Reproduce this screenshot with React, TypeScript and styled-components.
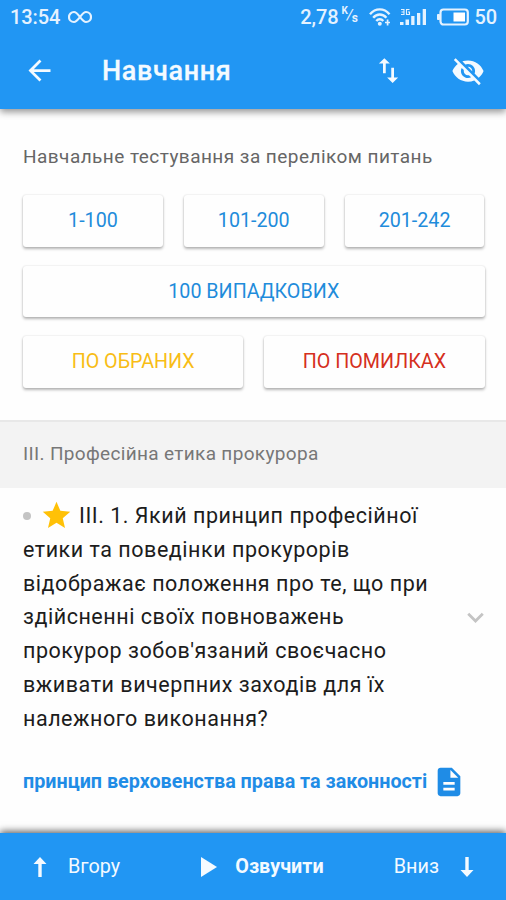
import React from "react";
import styled, { createGlobalStyle } from "styled-components";

const BLUE = "#2196f3";

const GlobalStyle = createGlobalStyle`
  * { box-sizing: border-box; }
  body { margin: 0; background: #fefefe; font-family: Roboto, sans-serif; }
`;

const Screen = styled.div`
  width: 506px;
  height: 900px;
  display: flex;
  flex-direction: column;
  overflow: hidden;
  background: #fefefe;
`;

const Header = styled.header`
  height: 109px;
  flex: none;
  background: ${BLUE};
  color: #f4faff;
  box-shadow: 0 3px 7px rgba(0, 0, 0, 0.42);
  z-index: 1;
`;

const StatusBar = styled.div`
  height: 32px;
  display: flex;
  align-items: center;
  gap: 8px;
  padding: 1px 9px 0 10px;
  color: #e4f2ff;
  svg { display: block; flex: none; }
`;

const StatusText = styled.span`
  font-size: 20px;
  font-weight: 500;
  line-height: 24px;
  letter-spacing: -0.1px;
  white-space: nowrap;
`;

const StatusGroup = styled.div`
  display: flex;
  align-items: center;
  gap: 9px;
  margin-left: auto;
`;

const SpeedReading = styled.div`
  display: flex;
  align-items: center;
  margin-right: 1px;
`;

const SpeedUnit = styled.span`
  display: flex;
  width: 18px;
  margin-left: 3px;
  font-size: 11px;
  font-weight: 700;
  line-height: 12px;
  sup, i, sub { line-height: 12px; vertical-align: baseline; }
  sup { font-size: 10px; margin-top: -4px; }
  i { font-size: 15px; font-weight: 400; margin-left: -1px; }
  sub { font-size: 12px; margin-top: 3px; margin-left: -1px; }
`;

const BatteryReading = styled.div`
  display: flex;
  align-items: center;
  gap: 5px;
  margin-left: 1px;
`;

const Toolbar = styled.div`
  height: 77px;
  display: flex;
  align-items: center;
  padding: 0 21px 0 23px;
  svg { display: block; flex: none; }
`;

const Title = styled.h1`
  margin: 0 auto 0 46px;
  font-size: 27px;
  font-weight: 500;
  line-height: 34px;
  letter-spacing: 0.65px;
  -webkit-text-stroke: 0.3px currentColor;
`;

const ToolbarActions = styled.div`
  display: flex;
  align-items: center;
  gap: 46px;
`;

const Content = styled.main`
  flex: 1;
  min-height: 0;
  display: flex;
  flex-direction: column;
`;

const TestPanel = styled.section`
  height: 313px;
  flex: none;
  padding: 36px 21.5px 0 23px;
  border-bottom: 2px solid #e8e8e8;
`;

const PanelTitle = styled.h2`
  margin: 0 0 26px;
  font-size: 19px;
  font-weight: 400;
  line-height: 24px;
  letter-spacing: 0.45px;
  color: #666;
  white-space: nowrap;
`;

const ButtonRow = styled.div<{ $columns: number }>`
  display: grid;
  grid-template-columns: repeat(${(p) => p.$columns}, 1fr);
  column-gap: 21px;
  margin-bottom: 19px;
`;

const RaisedButton = styled.button<{ $color?: string }>`
  height: 51.5px;
  padding: 1px 0 0;
  border: 0;
  border-radius: 3px;
  background: #fefefe;
  color: ${(p) => p.$color ?? "#1f8cdb"};
  box-shadow: 0 2px 3px rgba(0, 0, 0, 0.28), 0 0 2px rgba(0, 0, 0, 0.14);
  font-family: inherit;
  font-size: 19.7px;
  line-height: 24px;
`;

const SectionHeader = styled.h3`
  height: 66px;
  flex: none;
  margin: 0;
  padding: 20px 23px 0;
  background: #f3f3f3;
  color: #777;
  font-size: 19px;
  font-weight: 400;
  line-height: 24px;
  letter-spacing: 0.33px;
`;

const Question = styled.section`
  display: flex;
  align-items: center;
  padding: 11px 14px 0 23px;
  svg { display: block; flex: none; }
`;

const QuestionText = styled.div`
  flex: 1;
  color: #1c1c1c;
`;

const TextLine = styled.div`
  height: 33.75px;
  display: flex;
  align-items: center;
  font-size: 21.5px;
  line-height: 33.75px;
  letter-spacing: 0.53px;
  white-space: nowrap;
`;

const Dot = styled.span`
  width: 8px;
  height: 8px;
  margin-right: 9px;
  border-radius: 50%;
  background: #c4c4c4;
`;

const StarSlot = styled.span`
  margin-right: 6px;
`;

const Answer = styled.div`
  display: flex;
  align-items: center;
  padding: 29px 0 0 23px;
  color: #1f8ce6;
  font-size: 19.75px;
  font-weight: 700;
  line-height: 34px;
  white-space: nowrap;
  span { padding-top: 1px; }
  svg { display: block; flex: none; margin-left: 5px; }
`;

const Footer = styled.footer`
  height: 67px;
  flex: none;
  display: flex;
  align-items: center;
  justify-content: space-between;
  padding: 0 32px 0 33px;
  background: ${BLUE};
  color: #f4faff;
  box-shadow: 0 -2px 7px rgba(0, 0, 0, 0.6);
  z-index: 1;
`;

const FooterAction = styled.div<{ $primary?: boolean }>`
  display: flex;
  align-items: center;
  gap: ${(p) => (p.$primary ? 18 : 21)}px;
  margin-left: ${(p) => (p.$primary ? 11 : 0)}px;
  font-size: 19.8px;
  line-height: 24px;
  font-weight: ${(p) => (p.$primary ? 700 : 400)};
  svg { display: block; flex: none; }
`;

function Icon({ d, size = 33, color = "currentColor" }: { d: string; size?: number; color?: string }) {
  return (
    <svg width={size} height={size} viewBox="0 0 24 24" fill={color}>
      <path d={d} />
    </svg>
  );
}

const paths = {
  back: "M20 11H7.83l5.59-5.59L12 4l-8 8 8 8 1.41-1.41L7.83 13H20v-2z",
  swap: "M16 17.01V10h-2v7.01h-3L15 21l4-3.99h-3zM9 3L5 6.99h3V14h2V6.99h3L9 3z",
  eyeOff:
    "M12 7c2.76 0 5 2.24 5 5 0 .65-.13 1.26-.36 1.83l2.92 2.92c1.51-1.26 2.7-2.89 3.43-4.75-1.73-4.39-6-7.5-11-7.5-1.4 0-2.74.25-3.98.7l2.16 2.16C10.74 7.13 11.35 7 12 7zM2 4.27l2.28 2.28.46.46C3.08 8.3 1.78 10.02 1 12c1.73 4.39 6 7.5 11 7.5 1.55 0 3.03-.3 4.38-.84l.42.42L19.73 22 21 20.73 3.27 3 2 4.27zM7.53 9.8l1.55 1.55c-.05.21-.08.43-.08.65 0 1.66 1.34 3 3 3 .22 0 .44-.03.65-.08l1.55 1.55c-.67.33-1.41.53-2.2.53-2.76 0-5-2.24-5-5 0-.79.2-1.53.53-2.2zm4.31-.78l3.15 3.15.02-.16c0-1.66-1.34-3-3-3l-.17.01z",
  star: "M12 17.27L18.18 21l-1.64-7.03L22 9.24l-7.19-.61L12 2 9.19 8.63 2 9.24l5.46 4.73L5.82 21z",
  document:
    "M14 2H6c-1.1 0-1.99.9-1.99 2L4 20c0 1.1.89 2 1.99 2H18c1.1 0 2-.9 2-2V8l-6-6zm2 16H8v-2h8v2zm0-4H8v-2h8v2zm-3-5V3.5L18.5 9H13z",
  chevron: "M16.59 8.59L12 13.17 7.41 8.59 6 10l6 6 6-6z",
};

function InfinityIcon() {
  return (
    <svg width="24" height="14" viewBox="0 0 24 14" fill="none" stroke="currentColor" strokeWidth="2.2">
      <path d="M12 7C9.4 3.6 8.2 2 6 2a5 5 0 0 0 0 10c2.2 0 3.4-1.6 6-5s3.8-5 6-5a5 5 0 0 1 0 10c-2.2 0-3.4-1.6-6-5z" />
    </svg>
  );
}

function Wifi() {
  return (
    <svg width="22" height="20" viewBox="0 0 22 20" fill="none" stroke="currentColor" strokeWidth="2.4">
      <path d="M1 7.2C6.5.7 15 .7 20.5 7.2M4.2 10.7c3.7-4.3 9.5-4.3 13.2 0M7.3 14c2-2.4 5-2.4 7 0" />
      <circle cx="10.8" cy="16.8" r="2" fill="currentColor" stroke="none" />
      <path d="M18.600 12.500v6M16 15.500h5" strokeWidth="1.700" />
    </svg>
  );
}

function Signal() {
  return (
    <svg width="27" height="18" viewBox="0 0 27 18" fill="currentColor">
      <path d="M0 14h3.500v3H0zM5.500 11.500H9V17H5.500zM11.200 8h3.300v9h-3.300zM17 5h3.300v12H17zM22.700 1H26v16h-3.300z" />
      <path d="M1 1.500h3v5H1M1.500 4H4M9.500 1.500h-3v5h3V4H8" fill="none" stroke="currentColor" strokeWidth="1.100" />
    </svg>
  );
}

function Battery() {
  return (
    <svg width="32" height="18" viewBox="0 0 32 18" fill="none">
      <rect x="3.500" y="1.500" width="27.300" height="15" rx="3" stroke="currentColor" strokeWidth="2.200" />
      <path d="M.5 6.500h2v5h-2z" fill="currentColor" stroke="currentColor" />
      <path d="M16.500 4.500h11.500v9H16.500z" fill="#fff" />
    </svg>
  );
}

function VerticalArrow({ down }: { down?: boolean }) {
  return (
    <svg width="14" height="20" viewBox="0 0 14 20" fill="currentColor">
      <path d={down ? "M5.300 0h3.400v13H13.500L7 20 .5 13h4.800z" : "M5.300 20h3.400V7H13.500L7 0 .5 7h4.800z"} />
    </svg>
  );
}

const questionLines = [
  "етики та поведінки прокурорів",
  "відображає положення про те, що при",
  "здійсненні своїх повноважень",
  "прокурор зобов'язаний своєчасно",
  "вживати вичерпних заходів для їх",
  "належного виконання?",
];

export default function App() {
  return (
    <Screen>
      <GlobalStyle />
      <Header>
        <StatusBar>
          <StatusText>13:54</StatusText>
          <InfinityIcon />
          <StatusGroup>
            <SpeedReading>
              <StatusText>2,78</StatusText>
              <SpeedUnit><sup>K</sup><i>/</i><sub>s</sub></SpeedUnit>
            </SpeedReading>
            <Wifi />
            <Signal />
            <BatteryReading>
              <Battery />
              <StatusText>50</StatusText>
            </BatteryReading>
          </StatusGroup>
        </StatusBar>
        <Toolbar>
          <Icon d={paths.back} />
          <Title>Навчання</Title>
          <ToolbarActions>
            <Icon d={paths.swap} />
            <Icon d={paths.eyeOff} size={34} />
          </ToolbarActions>
        </Toolbar>
      </Header>
      <Content>
        <TestPanel>
          <PanelTitle>Навчальне тестування за переліком питань</PanelTitle>
          <ButtonRow $columns={3}>
            <RaisedButton>1-100</RaisedButton>
            <RaisedButton>101-200</RaisedButton>
            <RaisedButton>201-242</RaisedButton>
          </ButtonRow>
          <ButtonRow $columns={1}>
            <RaisedButton>100 ВИПАДКОВИХ</RaisedButton>
          </ButtonRow>
          <ButtonRow $columns={2}>
            <RaisedButton $color="#f8bd16">ПО ОБРАНИХ</RaisedButton>
            <RaisedButton $color="#d52f20">ПО ПОМИЛКАХ</RaisedButton>
          </ButtonRow>
        </TestPanel>
        <SectionHeader>III. Професійна етика прокурора</SectionHeader>
        <Question>
          <QuestionText>
            <TextLine>
              <Dot />
              <StarSlot><Icon d={paths.star} size={33} color="#ffc107" /></StarSlot>
              III. 1. Який принцип професійної
            </TextLine>
            {questionLines.map((line) => (
              <TextLine key={line}>{line}</TextLine>
            ))}
          </QuestionText>
          <Icon d={paths.chevron} size={33} color="#c4c4c4" />
        </Question>
        <Answer>
          <span>принцип верховенства права та законності</span>
          <Icon d={paths.document} size={34} />
        </Answer>
      </Content>
      <Footer>
        <FooterAction><VerticalArrow />Вгору</FooterAction>
        <FooterAction $primary>
          <svg width="16" height="20" viewBox="0 0 16 20" fill="currentColor"><path d="M0 0l16 10L0 20z" /></svg>
          Озвучити
        </FooterAction>
        <FooterAction>Вниз<VerticalArrow down /></FooterAction>
      </Footer>
    </Screen>
  );
}
